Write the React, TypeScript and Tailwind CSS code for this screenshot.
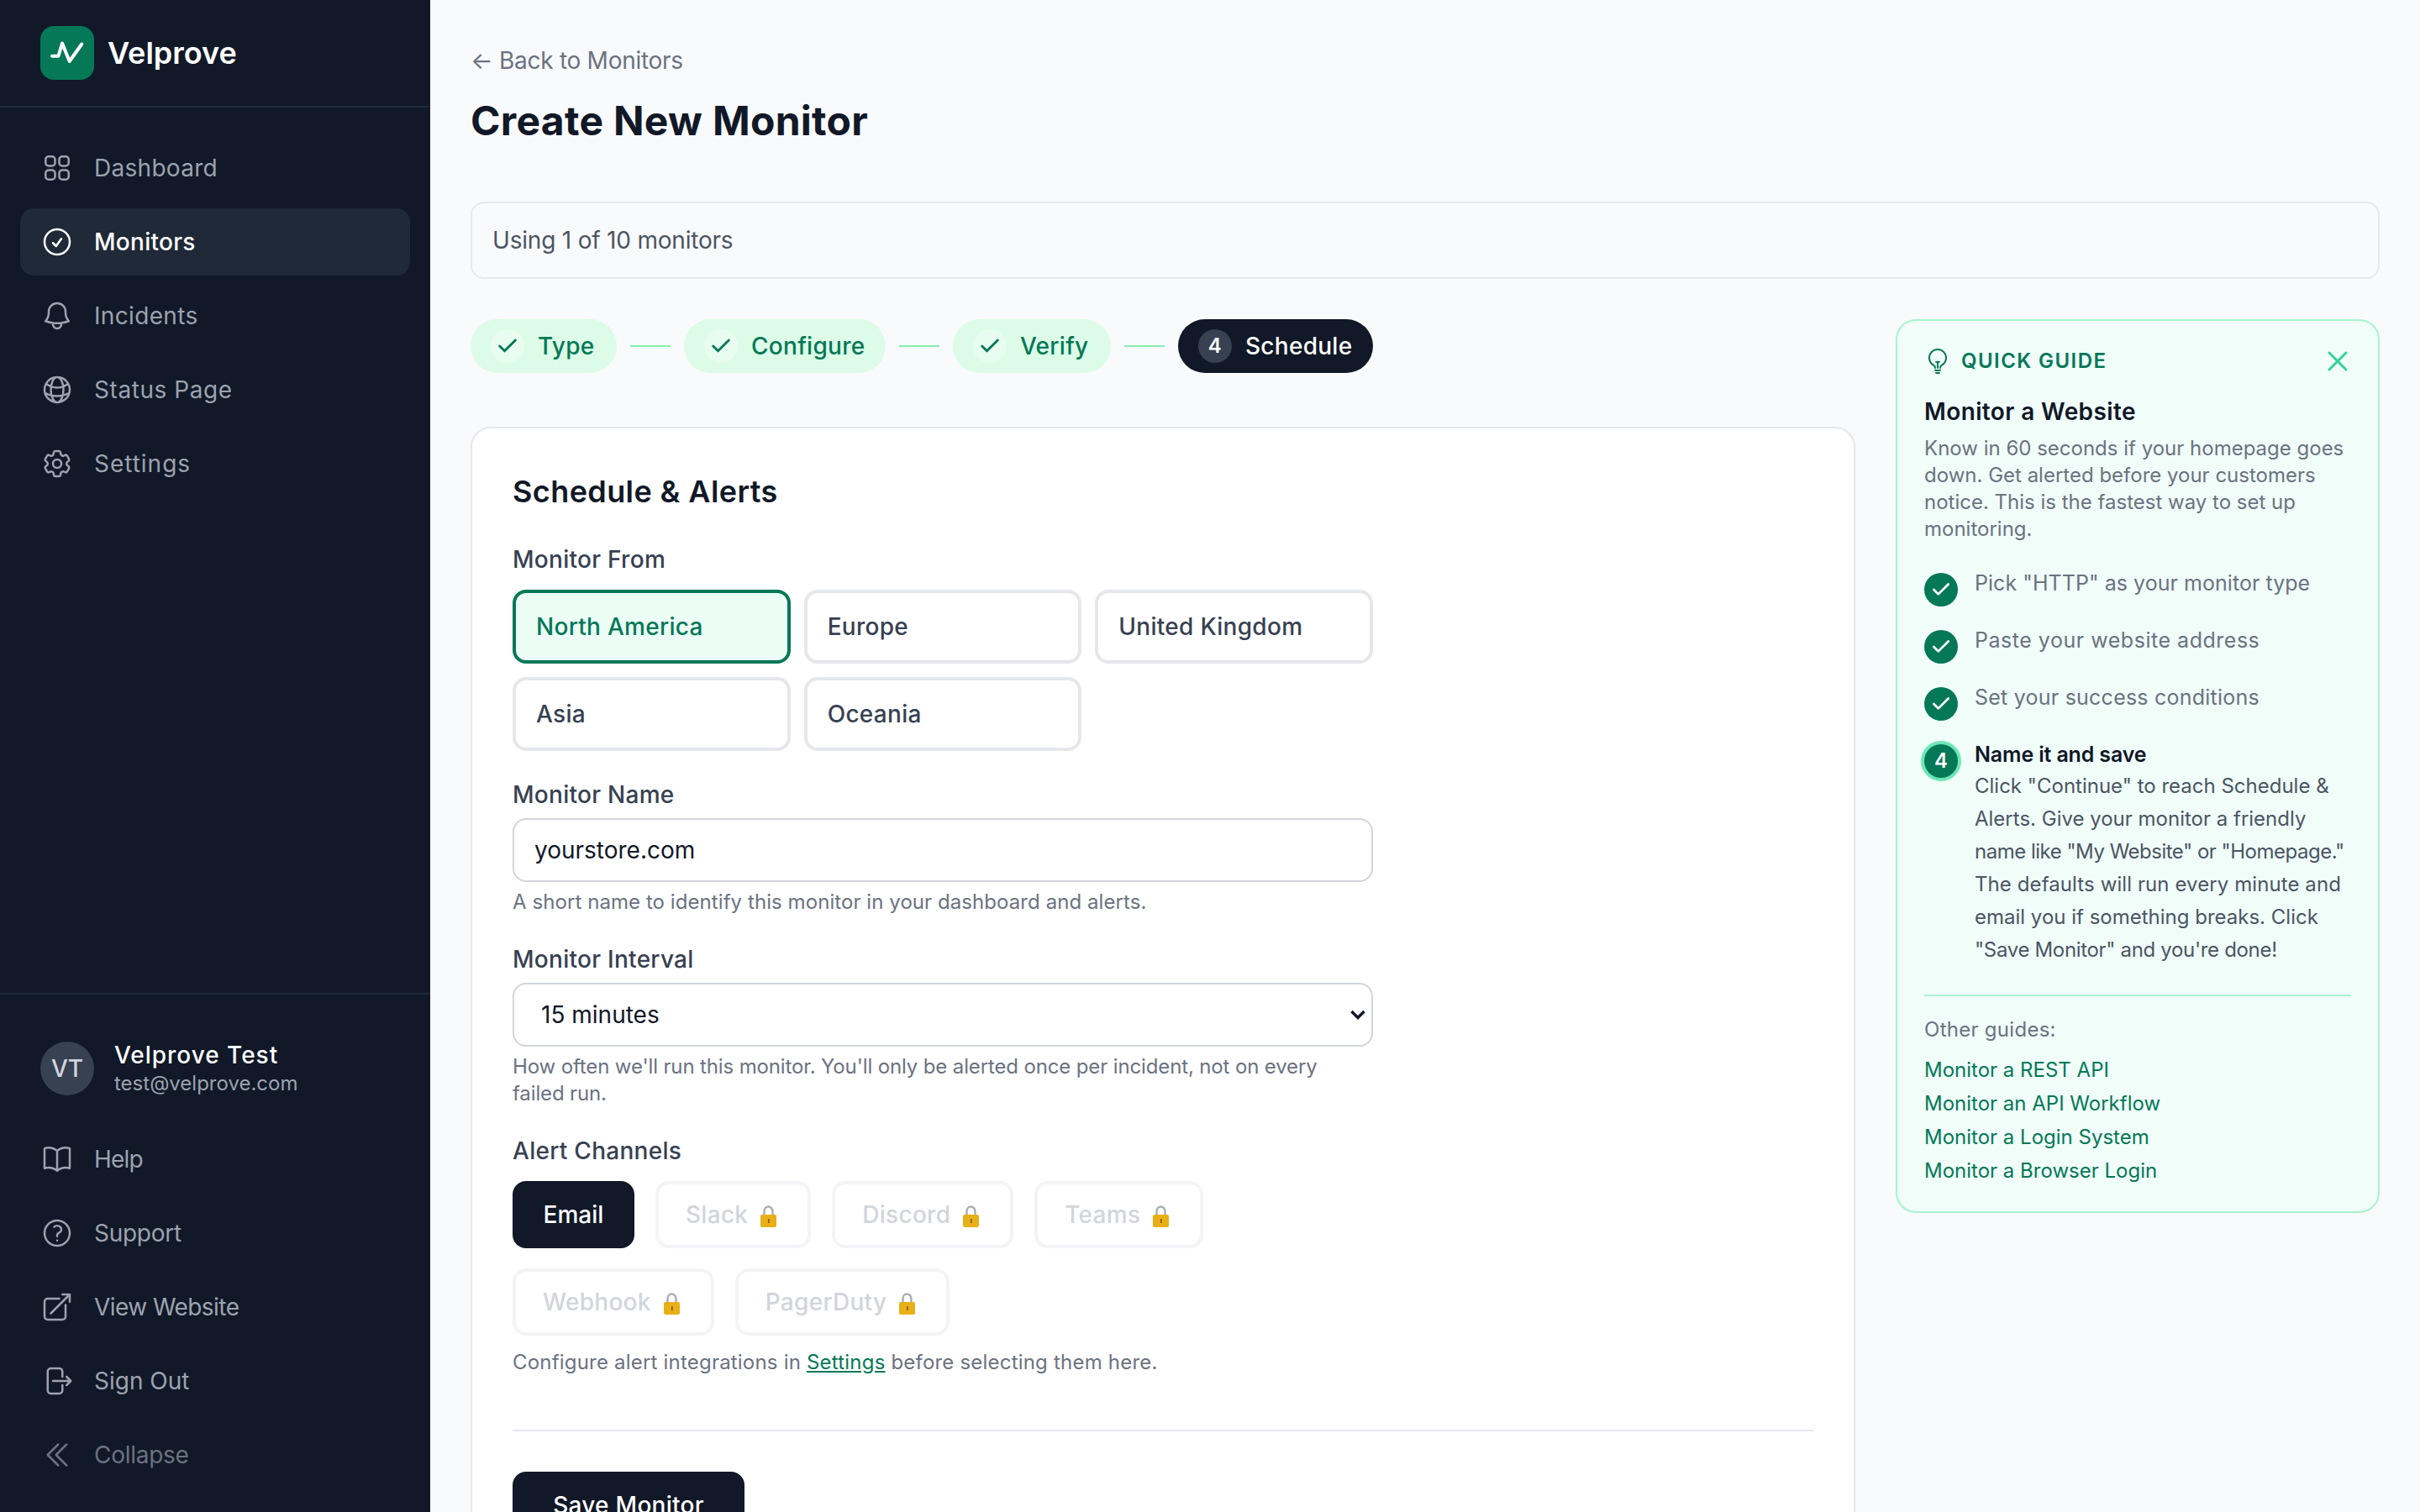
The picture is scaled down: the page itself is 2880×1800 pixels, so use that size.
import React from "react";
import { Check, X } from "lucide-react";
import {
  HiOutlineSquares2X2,
  HiOutlineCheckCircle,
  HiOutlineBell,
  HiOutlineGlobeAlt,
  HiOutlineCog6Tooth,
  HiOutlineBookOpen,
  HiOutlineQuestionMarkCircle,
  HiOutlineArrowTopRightOnSquare,
  HiOutlineArrowRightOnRectangle,
  HiOutlineChevronDoubleLeft,
  HiOutlineLightBulb,
} from "react-icons/hi2";

function NavItem({ icon: Icon, label, active, muted, track }: { icon: any; label: string; active?: boolean; muted?: boolean; track: string }) {
  const tone = active
    ? "bg-[#1f2937] text-white font-medium"
    : muted
      ? "text-[#6b7280]"
      : "text-[#9ca3af]";
  return (
    <div className={`flex h-20 items-center gap-6 rounded-2xl px-6 text-[28px] ${track} ${tone}`}>
      <Icon className="h-10 w-10 shrink-0" />
      <span>{label}</span>
    </div>
  );
}

function Step({ label, n, done, width }: { label: string; n?: number; done?: boolean; width: string }) {
  return (
    <div
      className={`flex h-16 items-center gap-4 rounded-full px-6 text-[28px] font-medium tracking-[0.01em] ${width} ${
        done ? "bg-[#dcfce7] text-[#047857]" : "bg-[#111827] text-white"
      }`}
    >
      <span
        className={`flex h-10 w-10 items-center justify-center rounded-full text-[24px] font-semibold ${
          done ? "bg-[#e8fdf0]" : "bg-[#374151]"
        }`}
      >
        {done ? <Check size={28} strokeWidth={2.5} /> : n}
      </span>
      <span>{label}</span>
    </div>
  );
}

function Line() {
  return <div className="h-[2px] w-12 bg-[#86efac]" />;
}

function Region({ label, active }: { label: string; active?: boolean }) {
  return (
    <div
      className={`flex h-[88px] items-center rounded-2xl border-4 px-6 text-[28px] font-medium tracking-[0.01em] ${
        active ? "border-[#047857] bg-[#ecfdf5] text-[#047857]" : "border-[#e5e7eb] bg-white text-[#374151]"
      }`}
    >
      {label}
    </div>
  );
}

function Lock() {
  return (
    <svg viewBox="0 0 21 26" className="ml-[14px] mr-1 mt-1 h-[26px] w-[21px]">
      <path d="M5.5 13V7a5 5.5 0 0 1 10 0v6" fill="none" stroke="#a8b0b5" strokeWidth="2.5" />
      <rect x="1" y="11" width="19" height="15" rx="2" fill="#e8af17" />
      <rect x="10" y="16" width="1.6" height="5" fill="#7a5c10" />
    </svg>
  );
}

function Channel({ label }: { label: string }) {
  return (
    <div className="flex h-20 items-center rounded-2xl border-4 border-[#f3f4f6] bg-white px-8 text-[28px] font-medium tracking-[0.01em] text-[#d1d5db]">
      <span>{label}</span>
      <Lock />
    </div>
  );
}

function Done({ label, track }: { label: string; track: string }) {
  return (
    <div className="flex h-10 items-start gap-5">
      <span className="flex h-10 w-10 shrink-0 items-center justify-center rounded-full bg-[#047857] text-white">
        <Check size={26} strokeWidth={2.5} />
      </span>
      <span className={`text-[25px] leading-6 text-[#6b7280] ${track}`}>{label}</span>
    </div>
  );
}

const labelCls = "h-10 text-[28px] font-medium leading-10 tracking-[0.01em] text-[#374151]";
const helpCls = "text-[24px] leading-8 text-[#6b7280]";

export default function App() {
  return (
    <div className="flex h-screen w-full overflow-hidden bg-[#f9fafb] font-['Inter',sans-serif]">
      <aside className="flex w-[512px] shrink-0 flex-col bg-[#111827]">
        <div className="flex h-[128px] items-center gap-4 border-b-2 border-[#1f2937] px-12">
          <div className="flex h-16 w-16 items-center justify-center rounded-2xl bg-[#047857]">
            <svg viewBox="0 0 64 64" className="h-16 w-16" fill="none" stroke="white" strokeWidth="4" strokeLinecap="round" strokeLinejoin="round">
              <path d="M14 35.7h7.5L26 20.5 34.7 42 49.3 21.5" />
            </svg>
          </div>
          <span className="text-[36px] font-semibold leading-none text-white">Velprove</span>
        </div>
        <nav className="flex flex-1 flex-col gap-2 px-6 pt-8">
          <NavItem icon={HiOutlineSquares2X2} label="Dashboard" track="tracking-[0.01em]" />
          <NavItem icon={HiOutlineCheckCircle} label="Monitors" active track="tracking-[0.01em]" />
          <NavItem icon={HiOutlineBell} label="Incidents" track="tracking-[0.012em]" />
          <NavItem icon={HiOutlineGlobeAlt} label="Status Page" track="tracking-[0.02em]" />
          <NavItem icon={HiOutlineCog6Tooth} label="Settings" track="tracking-[0.035em]" />
        </nav>
        <div className="border-t-2 border-[#1f2937] pb-7 pt-14">
          <div className="flex h-16 items-center gap-6 px-12">
            <div className="flex h-16 w-16 items-center justify-center rounded-full bg-[#374151] text-[28px] font-medium text-[#d1d5db]">
              VT
            </div>
            <div>
              <div className="text-[28px] font-medium leading-9 tracking-[0.035em] text-white">Velprove Test</div>
              <div className="text-[24px] leading-8 text-[#9ca3af]">test@velprove.com</div>
            </div>
          </div>
          <div className="mt-9 flex flex-col gap-2 px-6">
            <NavItem icon={HiOutlineBookOpen} label="Help" track="tracking-[-0.03em]" />
            <NavItem icon={HiOutlineQuestionMarkCircle} label="Support" track="tracking-[-0.01em]" />
            <NavItem icon={HiOutlineArrowTopRightOnSquare} label="View Website" track="tracking-[-0.02em]" />
            <NavItem icon={HiOutlineArrowRightOnRectangle} label="Sign Out" track="tracking-normal" />
            <NavItem icon={HiOutlineChevronDoubleLeft} label="Collapse" muted track="tracking-[-0.01em]" />
          </div>
        </div>
      </aside>

      <main className="min-w-0 flex-1 px-12 pt-[52px]">
        <div className="h-10 text-[28px] leading-10 tracking-[-0.01em] text-[#6b7280]">← Back to Monitors</div>
        <h1 className="mt-[22px] h-[60px] text-[48px] font-bold leading-[60px] tracking-[0.3px] text-[#111827]">Create New Monitor</h1>
        <div className="mt-[66px] flex h-[92px] items-center rounded-2xl border-2 border-[#e5e7eb] px-6 text-[28px] tracking-[-0.2px] text-[#4b5563]">
          Using 1 of 10 monitors
        </div>

        <div className="mt-12 flex items-start gap-12">
          <div className="min-w-0 flex-1">
            <div className="flex items-center gap-4">
              <Step label="Type" done width="w-[174px]" />
              <Line />
              <Step label="Configure" done width="w-[240px]" />
              <Line />
              <Step label="Verify" done width="w-[188px]" />
              <Line />
              <Step label="Schedule" n={4} width="w-[232px]" />
            </div>

            <div className="mt-16 rounded-3xl border-2 border-[#e5e7eb] bg-white p-12">
              <h2 className="h-14 text-[36px] font-semibold leading-[54px] tracking-[0.4px] text-[#111827]">Schedule &amp; Alerts</h2>
              <div className="w-[1024px]">
                <div className={`mt-8 ${labelCls}`}>Monitor From</div>
                <div className="mt-4 grid grid-cols-3 gap-4">
                  <Region label="North America" active />
                  <Region label="Europe" />
                  <Region label="United Kingdom" />
                  <Region label="Asia" />
                  <Region label="Oceania" />
                </div>

                <div className={`mt-8 ${labelCls}`}>Monitor Name</div>
                <div className="mt-2 flex h-[76px] items-center rounded-2xl border-2 border-[#d1d5db] px-6 text-[28px] text-[#111827]">
                  yourstore.com
                </div>
                <div className={`mt-2 tracking-[0.07px] ${helpCls}`}>A short name to identify this monitor in your dashboard and alerts.</div>

                <div className={`mt-8 ${labelCls}`}>Monitor Interval</div>
                <div className="relative mt-2">
                  <select className="h-[76px] w-full appearance-none rounded-2xl border-2 border-[#d1d5db] bg-white pl-8 pr-6 text-[28px] text-[#111827]" defaultValue="15">
                    <option value="15">15 minutes</option>
                  </select>
                  <svg viewBox="0 0 18 12" className="pointer-events-none absolute right-[9px] top-[32px] h-3 w-[18px]" fill="none" stroke="#111827" strokeWidth="3.5">
                    <path d="M1.5 2 9 9.5 16.5 2" />
                  </svg>
                </div>
                <div className={`mt-2 tracking-[-0.135px] ${helpCls}`}>
                  How often we'll run this monitor. You'll only be alerted once per incident, not on every
                  <br />
                  failed run.
                </div>

                <div className={`mt-8 ${labelCls}`}>Alert Channels</div>
                <div className="mt-4 flex flex-wrap gap-x-[25px] gap-y-6">
                  <div className="flex h-20 w-[145px] items-center justify-center rounded-2xl bg-[#111827] text-[28px] font-medium text-white">
                    Email
                  </div>
                  <Channel label="Slack" />
                  <Channel label="Discord" />
                  <Channel label="Teams" />
                  <Channel label="Webhook" />
                  <Channel label="PagerDuty" />
                </div>
                <div className={`mt-4 tracking-[0.2px] ${helpCls}`}>
                  Configure alert integrations in{" "}
                  <span className="text-[#047857] underline">Settings</span> before selecting them here.
                </div>
              </div>

              <div className="mt-16 h-[2px] bg-[#e5e7eb]" />
              <div className="mt-12 flex h-20 w-[276px] items-center justify-center rounded-2xl bg-[#111827] text-[28px] font-medium tracking-[0.01em] text-white">
                Save Monitor
              </div>
            </div>
          </div>

          <aside className="w-[576px] shrink-0 rounded-3xl border-2 border-[#a7f3d0] bg-[#f0fdf9] px-8 pb-[28px] pt-[28px]">
            <div className="flex h-10 items-center">
              <HiOutlineLightBulb className="h-8 w-8 text-[#047857]" />
              <span className="ml-3 flex-1 text-[24px] font-semibold uppercase tracking-[0.06em] text-[#047857]">Quick Guide</span>
              <X size={40} className="-mr-1 text-[#34d399]" strokeWidth={1.8} />
            </div>
            <div className="mt-[20px] h-10 text-[28px] font-semibold leading-10 tracking-[0.38px] text-[#111827]">Monitor a Website</div>
            <p className="mt-2 text-[24px] leading-8 text-[#6b7280]">
              Know in 60 seconds if your homepage goes down. Get alerted before your customers notice. This is the fastest way to set up monitoring.
            </p>
            <div className="mt-9 flex flex-col gap-7">
              <Done label={'Pick "HTTP" as your monitor type'} track="tracking-[0.04px]" />
              <Done label="Paste your website address" track="tracking-[0.52px]" />
              <Done label="Set your success conditions" track="tracking-[0.23px]" />
              <div className="flex items-start gap-5">
                <span className="flex h-10 w-10 shrink-0 items-center justify-center rounded-full bg-[#047857] text-[24px] font-semibold text-white ring-4 ring-[#6ee7b7]">
                  4
                </span>
                <div className="min-w-0">
                  <div className="text-[25px] font-semibold leading-6 tracking-[-0.15px] text-[#111827]">Name it and save</div>
                  <div className="mt-[6px] whitespace-nowrap text-[24px] leading-[39px] text-[#4b5563]">
                    <div>Click "Continue" to reach Schedule &amp;</div>
                    <div>Alerts. Give your monitor a friendly</div>
                    <div className="tracking-[-0.5px]">name like "My Website" or "Homepage."</div>
                    <div className="tracking-[0.09px]">The defaults will run every minute and</div>
                    <div>email you if something breaks. Click</div>
                    <div className="tracking-[-0.33px]">"Save Monitor" and you're done!</div>
                  </div>
                </div>
              </div>
            </div>
            <div className="mt-[34px] h-[2px] bg-[#a7f3d0]" />
            <div className="mt-6 text-[24px] leading-8 tracking-[0.28px] text-[#6b7280]">Other guides:</div>
            <div className="mt-3 flex flex-col text-[24px] leading-10 text-[#047857]">
              <span>Monitor a REST API</span>
              <span>Monitor an API Workflow</span>
              <span>Monitor a Login System</span>
              <span>Monitor a Browser Login</span>
            </div>
          </aside>
        </div>
      </main>
    </div>
  );
}
